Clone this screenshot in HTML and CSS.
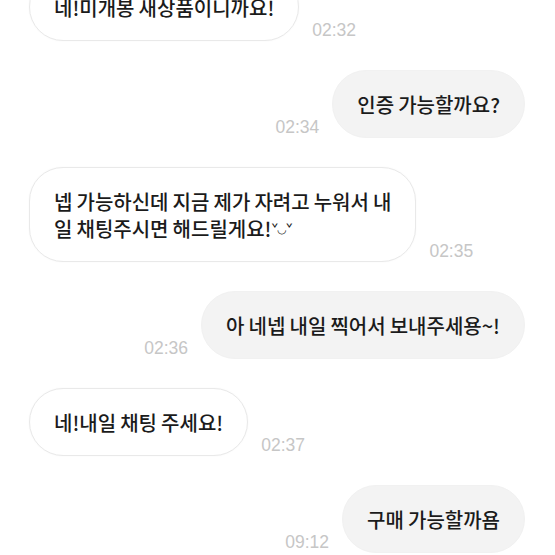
FILE: index.html
```html
<!DOCTYPE html>
<html lang="ko">

<head>
    <meta charset="UTF-8">
    <meta name="viewport" content="width=device-width, initial-scale=1.0">
    <title>채팅</title>
    <link rel="stylesheet" href="styles.css">
</head>

<body>
    <section class="chat">
        <div class="row received">
            <div class="bubble">네!미개봉 새상품이니까요!</div>
            <span class="time">02:32</span>
        </div>
        <div class="row sent">
            <span class="time">02:34</span>
            <div class="bubble">인증 가능할까요?</div>
        </div>
        <div class="row received">
            <div class="bubble">넵 가능하신데 지금 제가 자려고 누워서 내<br>일 채팅주시면 해드릴게요!<span class="emo">ˇ◡ˇ</span></div>
            <span class="time">02:35</span>
        </div>
        <div class="row sent">
            <span class="time">02:36</span>
            <div class="bubble">아 네넵 내일 찍어서 보내주세용~!</div>
        </div>
        <div class="row received">
            <div class="bubble">네!내일 채팅 주세요!</div>
            <span class="time">02:37</span>
        </div>
        <div class="row sent">
            <span class="time">09:12</span>
            <div class="bubble">구매 가능할까욤</div>
        </div>
    </section>
</body>

</html>
```

FILE: styles.css
```css
* {
    padding: 0;
    margin: 0;
    box-sizing: border-box;
}

html,
body {
    height: 100%;
    overflow: hidden;
    background-color: #fff;
}

body {
    font-family: "Noto Sans CJK KR", "Noto Sans", sans-serif;
    color: #1b1b1b;
}

.chat {
    display: flex;
    flex-direction: column;
    gap: 29px;
    /* view is scrolled, first bubble is cut at the top */
    margin-top: -27px;
}

.row {
    display: flex;
    align-items: flex-end;
    gap: 13px;
}

.received {
    justify-content: flex-start;
    padding-left: 29px;
}

.sent {
    justify-content: flex-end;
    padding-right: 30px;
}

.bubble {
    font-size: 20px;
    font-weight: 500;
    word-spacing: -1.5px;
    line-height: 26px;
    padding: 21px 24px 19px;
    border-radius: 34px;
    border: 1px solid #e9e9e9;
    background-color: #fff;
    white-space: nowrap;
}

.received .bubble {
    box-shadow: 0 0 2px rgba(0, 0, 0, 0.04);
}

.sent .bubble {
    background-color: #f3f3f3;
    border-color: #f1f1f1;
}

.emo {
    font-size: 11px;
    vertical-align: 4px;
    letter-spacing: -1px;
}

.time {
    font-family: "Liberation Sans", sans-serif;
    font-size: 17.5px;
    line-height: 18px;
    margin-bottom: 2px;
    color: #c6c6c6;
}
```
